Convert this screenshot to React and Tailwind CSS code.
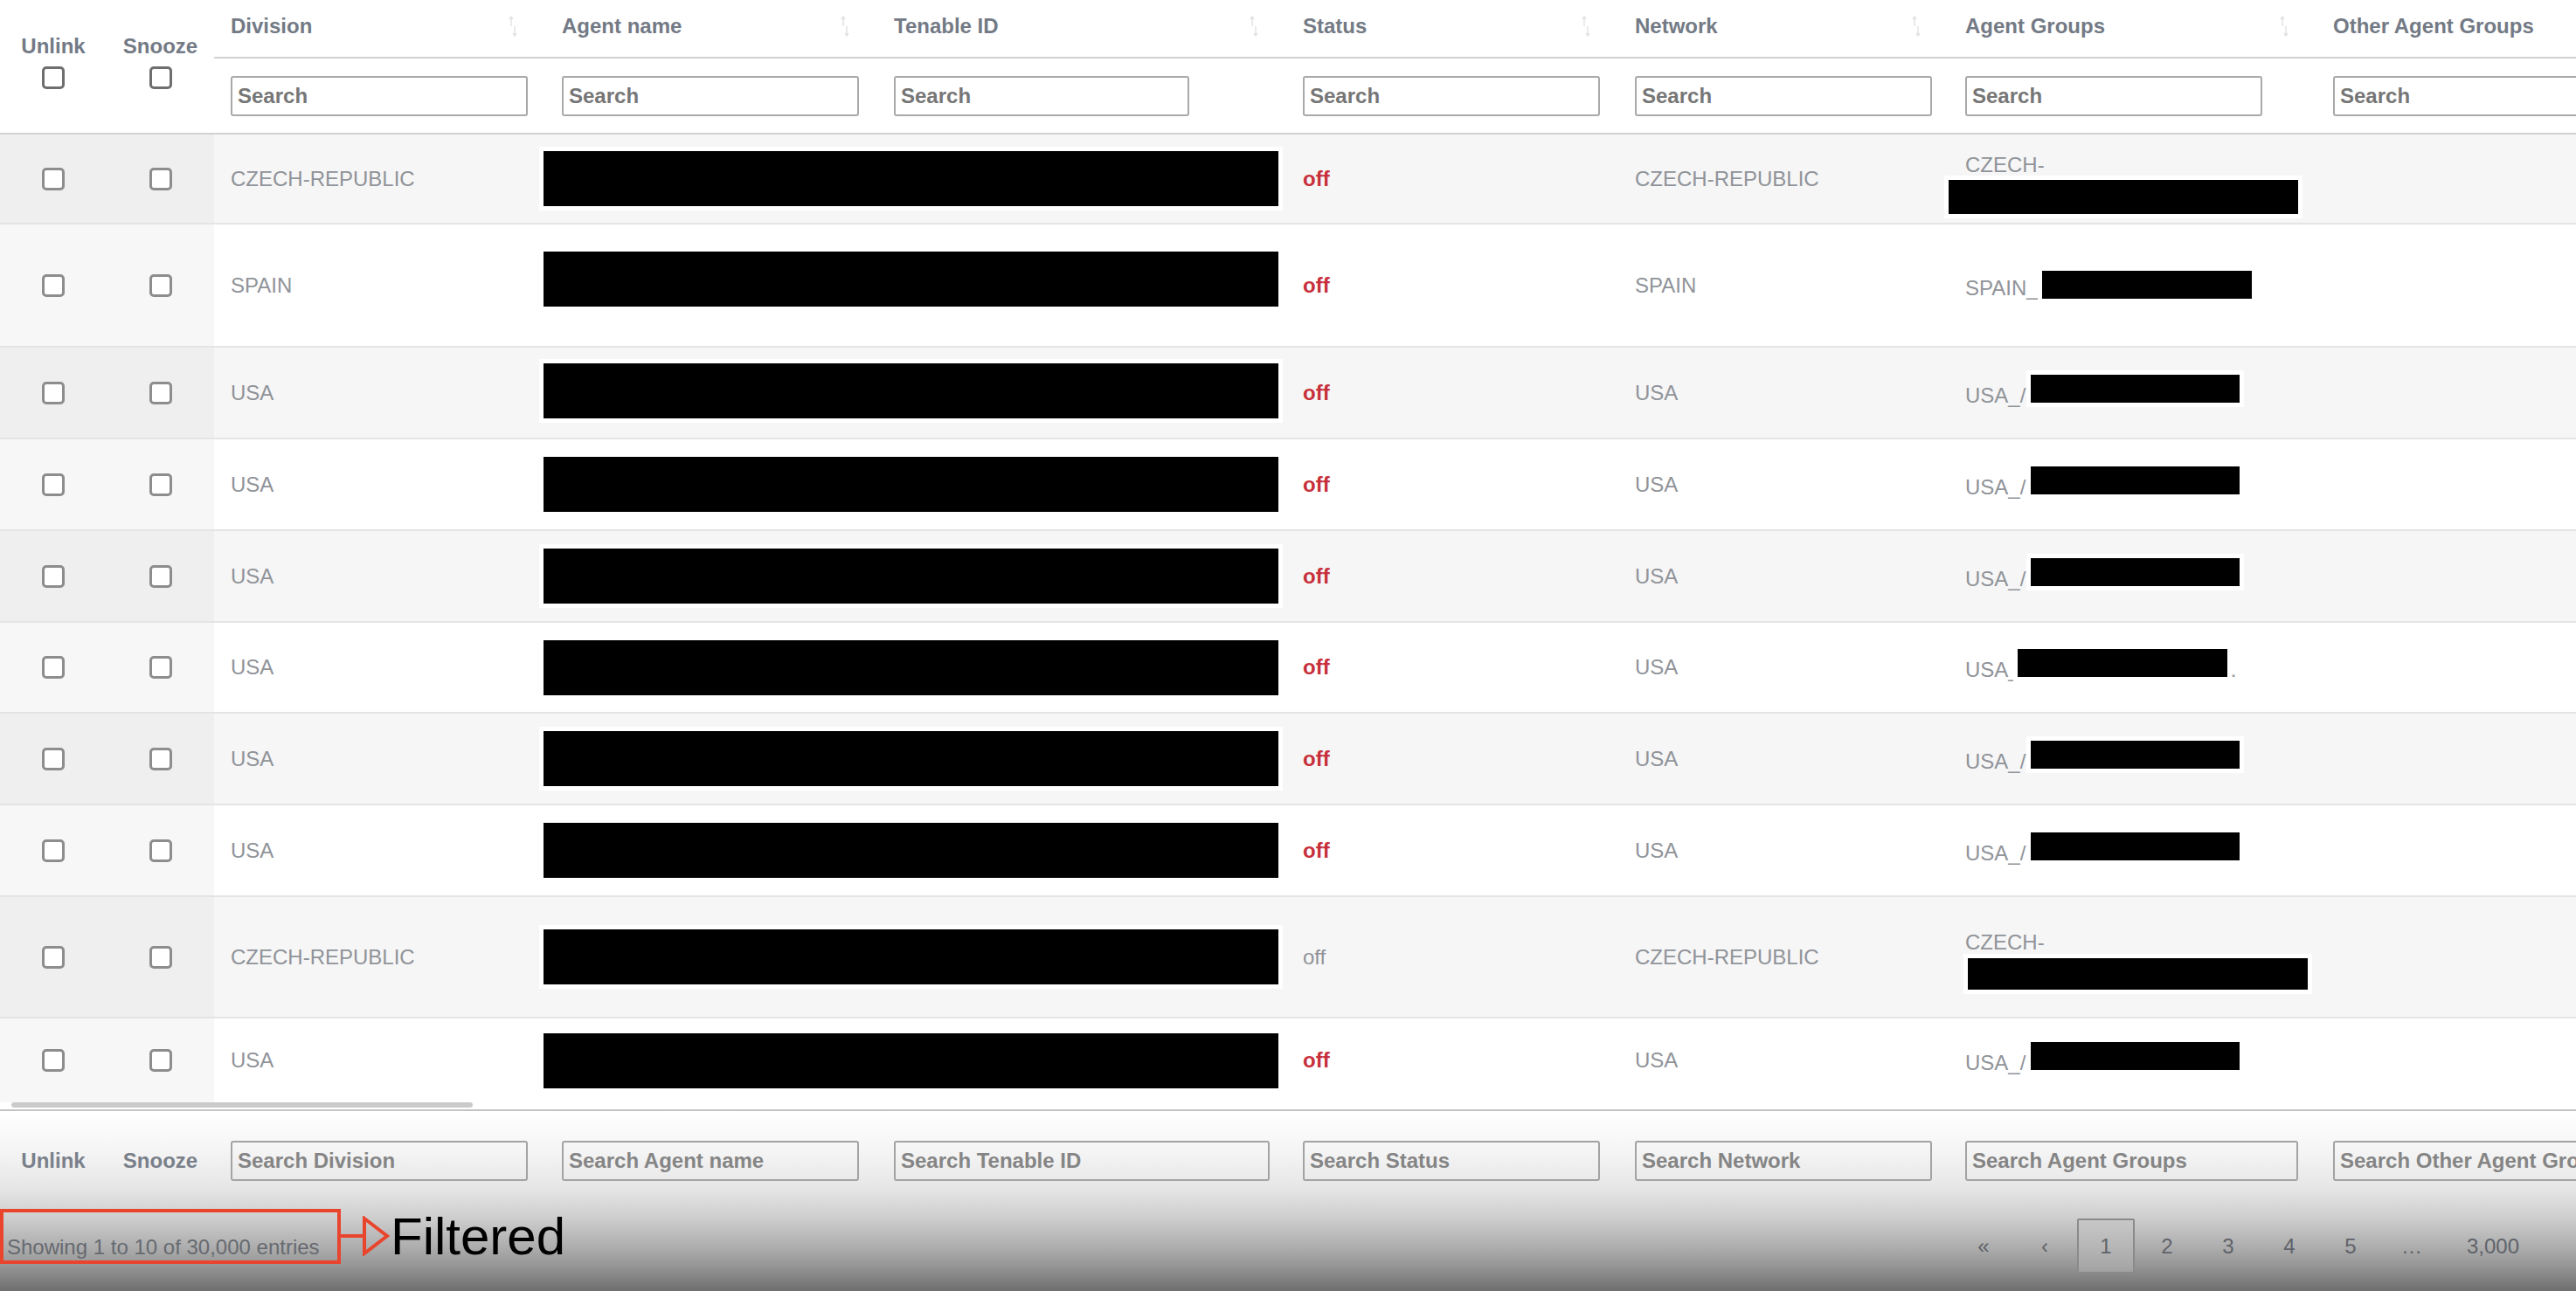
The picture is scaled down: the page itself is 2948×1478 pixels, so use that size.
import React from "react";

const GRID =
  "grid grid-cols-[122px_123px_379px_380px_468px_380px_378px_421px_380px]";

const titles = [
  "Division",
  "Agent name",
  "Tenable ID",
  "Status",
  "Network",
  "Agent Groups",
  "Other Agent Groups",
];

const headInputs = ["w-[340px]", "w-[340px]", "w-[338px]", "w-[340px]", "w-[340px]", "w-[340px]", "w-[340px]"];

const footInputs = [
  { w: "w-[340px]", ph: "Search Division" },
  { w: "w-[340px]", ph: "Search Agent name" },
  { w: "w-[430px]", ph: "Search Tenable ID" },
  { w: "w-[340px]", ph: "Search Status" },
  { w: "w-[340px]", ph: "Search Network" },
  { w: "w-[381px]", ph: "Search Agent Groups" },
  { w: "w-[340px]", ph: "Search Other Agent Groups" },
];

const rows = [
  { country: "CZECH-REPUBLIC", h: "h-[103px]", off: true, group: "czech1", shift: "" },
  { country: "SPAIN", h: "h-[141px]", off: true, group: "spain", shift: "mb-[14px]" },
  { country: "USA", h: "h-[105px]", off: true, group: "usa", shift: "mb-[4px]" },
  { country: "USA", h: "h-[105px]", off: true, group: "usa", shift: "" },
  { country: "USA", h: "h-[105px]", off: true, group: "usa", shift: "" },
  { country: "USA", h: "h-[104px]", off: true, group: "usaDot", shift: "" },
  { country: "USA", h: "h-[105px]", off: true, group: "usa", shift: "" },
  { country: "USA", h: "h-[105px]", off: true, group: "usa", shift: "" },
  { country: "CZECH-REPUBLIC", h: "h-[139px]", off: false, group: "czech2", shift: "" },
  { country: "USA", h: "h-[96px]", off: true, group: "usa", shift: "", last: true },
];

function Checkbox({ dark }) {
  return (
    <div
      className={`w-[26px] h-[26px] rounded-[5px] border-[3px] bg-white ${
        dark ? "border-[#6e6e6e]" : "border-[#8d8d8d]"
      }`}
    />
  );
}

function SortIcon() {
  return (
    <svg width="10" height="28" viewBox="0 0 10 28" fill="none" stroke="#e3e3e3" strokeWidth="1.5">
      <path d="M3 3v11M1 6l2-3 2 3" />
      <path d="M7 25V14M5 22l2 3 2-3" />
    </svg>
  );
}

function Redact({ className }) {
  return <span className={`inline-block bg-black ring-[5px] ring-white ${className}`} />;
}

function Groups({ type }) {
  if (type === "czech1") {
    return (
      <div className="flex flex-col pt-[12px]">
        <span className="leading-[26px]">CZECH-</span>
        <Redact className="mt-[4px] ml-[-19px] w-[400px] h-[39px]" />
      </div>
    );
  }
  if (type === "czech2") {
    return (
      <div className="flex flex-col pt-[7px]">
        <span className="leading-[26px]">CZECH-</span>
        <Redact className="mt-[5px] ml-[3px] w-[389px] h-[36px]" />
      </div>
    );
  }
  if (type === "spain") {
    return (
      <div className="whitespace-nowrap">
        SPAIN_
        <Redact className="ml-[4px] w-[240px] h-[32px] align-baseline translate-y-[4px]" />
      </div>
    );
  }
  if (type === "usaDot") {
    return (
      <div className="whitespace-nowrap">
        USA_
        <Redact className="ml-[-3px] w-[240px] h-[32px] align-baseline" />
        <span className="ml-[4px]">.</span>
      </div>
    );
  }
  return (
    <div className="whitespace-nowrap">
      USA_/
      <Redact className="ml-[6px] w-[239px] h-[32px] align-baseline" />
    </div>
  );
}

export default function App() {
  return (
    <div className="w-[2948px] h-[1478px] overflow-hidden font-['Liberation_Sans',Arial,sans-serif] text-[24px] bg-[linear-gradient(to_bottom,#ffffff_0px,#ffffff_1272px,#f4f4f4_1320px,#e6e6e6_1360px,#cdcdcd_1395px,#b0b0b0_1425px,#959595_1450px,#6e6e6e_1478px)]">
      {/* header */}
      <div className={`${GRID} grid-rows-[67px_85px] border-b-2 border-[#d2d2d2] bg-white`}>
        <div className="row-span-2 flex flex-col items-center pt-[40px] font-bold text-[#737a85]">
          <span className="leading-[26px]">Unlink</span>
          <div className="mt-[10px]">
            <Checkbox dark />
          </div>
        </div>
        <div className="row-span-2 flex flex-col items-center pt-[40px] font-bold text-[#737a85]">
          <span className="leading-[26px]">Snooze</span>
          <div className="mt-[10px]">
            <Checkbox dark />
          </div>
        </div>
        {titles.map((t) => (
          <div
            key={t}
            className="flex items-center justify-between pl-[19px] pr-[32px] pb-[5px] border-b-2 border-[#d2d2d2] font-bold text-[#737a85] whitespace-nowrap"
          >
            <span>{t}</span>
            <SortIcon />
          </div>
        ))}
        {headInputs.map((w, i) => (
          <div key={i} className="flex items-center pl-[19px]">
            <input
              placeholder="Search"
              className={`${w} shrink-0 h-[46px] border-2 border-[#a9a9a9] rounded-[3px] px-[6px] font-bold bg-white outline-none placeholder:text-[#767676]`}
            />
          </div>
        ))}
      </div>

      {/* body */}
      {rows.map((r, i) => {
        const odd = i % 2 === 0;
        return (
          <div
            key={i}
            className={`${GRID} ${r.h} ${r.last ? "" : "border-b-2 border-[#e4e4e4]"} ${
              odd ? "bg-[#f6f6f6]" : "bg-white"
            } text-[#909399]`}
          >
            <div className={`flex items-center justify-center ${odd ? "bg-[#efefef]" : "bg-[#f7f7f7]"}`}>
              <Checkbox />
            </div>
            <div className={`flex items-center justify-center ${odd ? "bg-[#efefef]" : "bg-[#f7f7f7]"}`}>
              <Checkbox />
            </div>
            <div className="flex items-center pl-[19px]">{r.country}</div>
            <div className="col-span-2 flex items-center">
              <Redact className={`ml-[-2px] w-[841px] h-[63px] ${r.shift}`} />
            </div>
            <div className="flex items-center pl-[19px]">
              {r.off ? (
                <span className="font-bold text-[#c7303b]">off</span>
              ) : (
                <span className="text-[#909399]">off</span>
              )}
            </div>
            <div className="flex items-center pl-[19px]">{r.country}</div>
            <div className="flex items-center pl-[19px]">
              <Groups type={r.group} />
            </div>
            <div />
          </div>
        );
      })}

      {/* horizontal scrollbar */}
      <div className="h-[8px] pl-[13px]">
        <div className="w-[528px] h-[6px] rounded-full bg-[#cacaca]" />
      </div>

      {/* footer */}
      <div className={`${GRID} h-[110px] pt-[6px] border-t-2 border-[#c4c4c4]`}>
        <div className="flex items-center justify-center font-bold text-[#79808a]">Unlink</div>
        <div className="flex items-center justify-center font-bold text-[#79808a]">Snooze</div>
        {footInputs.map((f) => (
          <div key={f.ph} className="flex items-center pl-[19px]">
            <input
              placeholder={f.ph}
              className={`${f.w} shrink-0 h-[46px] border-2 border-[#a3a3a3] rounded-[3px] px-[6px] font-bold bg-transparent outline-none placeholder:text-[#858585]`}
            />
          </div>
        ))}
      </div>

      {/* info + pagination */}
      <div className="flex items-start h-[98px]">
        <div className="mt-[4px] w-[390px] h-[63px] border-[4px] border-[#e9452d] flex items-end pl-[4px] pb-[5px] leading-[20px] text-[#666a70] whitespace-nowrap">
          Showing 1 to 10 of 30,000 entries
        </div>
        <svg className="mt-[12px]" width="57" height="46" viewBox="0 0 57 46" fill="none" stroke="#e9452d" strokeWidth="4">
          <path d="M0 23H27" />
          <path d="M27 3L53 23L27 43Z" strokeLinejoin="miter" />
        </svg>
        <div className="mt-[6px] text-[60px] leading-[60px] text-black">Filtered</div>
        <div className="ml-auto mt-[15px] pr-[39px] flex items-center gap-[4px] text-[#5f636a]">
          <span className="w-[66px] h-[63px] flex items-center justify-center">«</span>
          <span className="w-[66px] h-[63px] flex items-center justify-center">‹</span>
          <span className="w-[66px] h-[63px] flex items-center justify-center border-2 border-[#8a8a8a] rounded-[2px] bg-[#c4c4c4]/40">
            1
          </span>
          <span className="w-[66px] h-[63px] flex items-center justify-center">2</span>
          <span className="w-[66px] h-[63px] flex items-center justify-center">3</span>
          <span className="w-[66px] h-[63px] flex items-center justify-center">4</span>
          <span className="w-[66px] h-[63px] flex items-center justify-center">5</span>
          <span className="w-[66px] h-[63px] flex items-center justify-center">…</span>
          <span className="h-[63px] px-[26px] flex items-center justify-center">3,000</span>
        </div>
      </div>
    </div>
  );
}
